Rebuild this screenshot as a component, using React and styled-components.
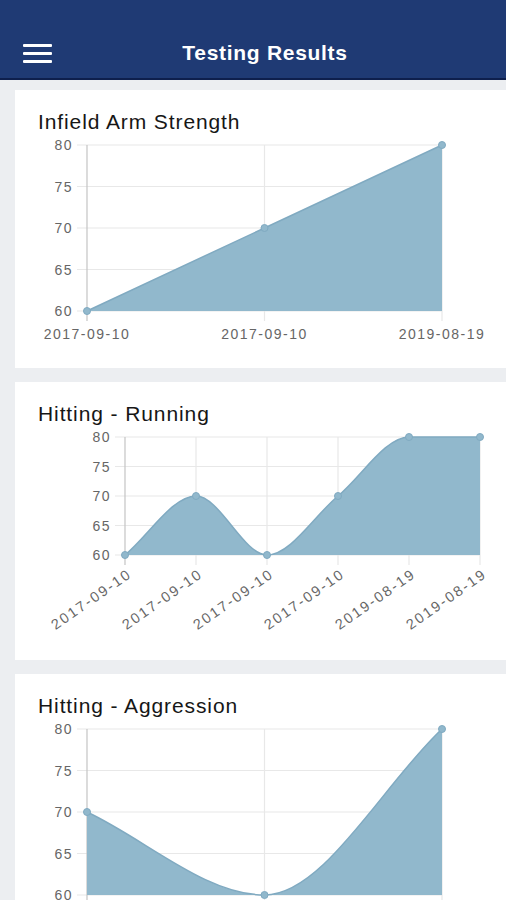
import React from 'react';
import styled, { createGlobalStyle } from 'styled-components';

const CHART_W = 491;
const CHART_H = 234;
const TOP = 11;
const MIN = 60;
const MAX = 80;
const STEPS = [80, 75, 70, 65, 60];

const charts = [
  {
    title: 'Infield Arm Strength',
    labels: ['2017-09-10', '2017-09-10', '2019-08-19'],
    values: [60, 70, 80],
    left: 72,
    right: 427,
    bottom: 177,
    curve: false,
  },
  {
    title: 'Hitting - Running',
    labels: ['2017-09-10', '2017-09-10', '2017-09-10', '2017-09-10', '2019-08-19', '2019-08-19'],
    values: [60, 70, 60, 70, 80, 80],
    left: 110,
    right: 465,
    bottom: 129,
    curve: true,
    rotate: true,
  },
  {
    title: 'Hitting - Aggression',
    labels: ['2017-09-10', '2017-09-10', '2019-08-19'],
    values: [70, 60, 80],
    left: 72,
    right: 427,
    bottom: 177,
    curve: true,
  },
];

// monotone cubic, same idea as chart.js cubicInterpolationMode: 'monotone'
function linePath(pts, curve) {
  if (!curve) return pts.map((p, i) => `${i ? 'L' : 'M'}${p.x},${p.y}`).join(' ');
  const n = pts.length;
  const d = [];
  for (let i = 0; i < n - 1; i++) d[i] = (pts[i + 1].y - pts[i].y) / (pts[i + 1].x - pts[i].x);
  const m = [];
  m[0] = d[0];
  m[n - 1] = d[n - 2];
  for (let i = 1; i < n - 1; i++) m[i] = d[i - 1] * d[i] <= 0 ? 0 : (d[i - 1] + d[i]) / 2;
  for (let i = 0; i < n - 1; i++) {
    if (d[i] === 0) {
      m[i] = 0;
      m[i + 1] = 0;
      continue;
    }
    const a = m[i] / d[i];
    const b = m[i + 1] / d[i];
    const s = a * a + b * b;
    if (s > 9) {
      const t = 3 / Math.sqrt(s);
      m[i] = t * a * d[i];
      m[i + 1] = t * b * d[i];
    }
  }
  let path = `M${pts[0].x},${pts[0].y}`;
  for (let i = 0; i < n - 1; i++) {
    const p0 = pts[i];
    const p1 = pts[i + 1];
    const dx = (p1.x - p0.x) / 3;
    path += ` C${p0.x + dx},${p0.y + m[i] * dx} ${p1.x - dx},${p1.y - m[i + 1] * dx} ${p1.x},${p1.y}`;
  }
  return path;
}

function Chart({ chart }) {
  const { labels, values, left, right, bottom, curve, rotate } = chart;
  const stepX = (right - left) / (values.length - 1);
  const yOf = (v) => bottom - ((v - MIN) / (MAX - MIN)) * (bottom - TOP);
  const pts = values.map((v, i) => ({ x: left + i * stepX, y: yOf(v) }));
  const line = linePath(pts, curve);
  const area = `${line} L${right},${bottom} L${left},${bottom} Z`;

  return (
    <Svg width={CHART_W} height={CHART_H}>
      {STEPS.map((s) => (
        <GridLine key={s} x1={left - 10} x2={right} y1={yOf(s)} y2={yOf(s)} />
      ))}
      {pts.map((p, i) => (
        <GridLine key={i} $axis={i === 0} x1={p.x} x2={p.x} y1={TOP} y2={bottom + 10} />
      ))}
      {STEPS.map((s) => (
        <AxisLabel key={s} x={left - 14} y={yOf(s) + 5} textAnchor="end">
          {s}
        </AxisLabel>
      ))}
      {pts.map((p, i) =>
        rotate ? (
          <AxisLabel
            key={i}
            $wide
            transform={`translate(${p.x + 2},${bottom + 13}) rotate(-35)`}
            y={10}
            textAnchor="end"
          >
            {labels[i]}
          </AxisLabel>
        ) : (
          <AxisLabel key={i} x={p.x} y={bottom + 28} textAnchor="middle">
            {labels[i]}
          </AxisLabel>
        )
      )}
      <Area d={area} />
      <Line d={line} />
      {pts.map((p, i) => (
        <Dot key={i} cx={p.x} cy={p.y} r={3.5} />
      ))}
    </Svg>
  );
}

export default function App() {
  return (
    <Page>
      <GlobalStyle />
      <Header>
        <NavBar>
          <Burger>
            <span />
            <span />
            <span />
          </Burger>
          <Title>Testing Results</Title>
        </NavBar>
      </Header>
      <List>
        {charts.map((c) => (
          <Card key={c.title}>
            <CardTitle>{c.title}</CardTitle>
            <Chart chart={c} />
          </Card>
        ))}
      </List>
    </Page>
  );
}

const GlobalStyle = createGlobalStyle`
  html, body {
    margin: 0;
    padding: 0;
    background: #eceef1;
    font-family: "Liberation Sans", Arial, sans-serif;
  }
`;

const Page = styled.div`
  width: 506px;
  height: 900px;
  overflow: hidden;
  background: #eceef1;
`;

const Header = styled.header`
  height: 54px;
  padding-top: 24px;
  background: #1f3a74;
  border-bottom: 2px solid #0e1f4d;
`;

const NavBar = styled.div`
  display: flex;
  align-items: center;
  height: 54px;
  padding: 0 28px 0 23px;
`;

const Burger = styled.div`
  display: flex;
  flex-direction: column;
  gap: 5px;
  width: 29px;
  margin-top: 4px;
  span {
    display: block;
    height: 3px;
    background: #fff;
    border-radius: 1px;
  }
`;

const Title = styled.h1`
  flex: 1;
  margin: 3px 0 0;
  text-align: center;
  color: #fff;
  font-size: 21px;
  font-weight: 700;
  letter-spacing: 0.7px;
`;

const List = styled.main`
  display: flex;
  flex-direction: column;
  gap: 14px;
  padding: 10px 0 0 15px;
`;

const Card = styled.section`
  background: #fff;
  padding-top: 20px;
  height: 278px;
  box-sizing: border-box;
  display: flex;
  flex-direction: column;
`;

const CardTitle = styled.h2`
  margin: 0 0 0 23px;
  font-size: 21px;
  line-height: 24px;
  font-weight: 400;
  color: #161616;
  letter-spacing: 0.9px;
`;

const Svg = styled.svg`
  display: block;
  flex-shrink: 0;
`;

const GridLine = styled.line`
  stroke: ${(p) => (p.$axis ? '#c4c4c4' : '#e8e8e8')};
  stroke-width: 1.2;
`;

const AxisLabel = styled.text`
  font-family: "Liberation Sans", Arial, sans-serif;
  font-size: ${(p) => (p.$wide ? '14.5px' : '14px')};
  letter-spacing: ${(p) => (p.$wide ? '2px' : '1.5px')};
  fill: #666;
`;

const Area = styled.path`
  fill: #91b8cc;
`;

const Line = styled.path`
  fill: none;
  stroke: #80aac1;
  stroke-width: 1.5;
`;

const Dot = styled.circle`
  fill: #91b8cc;
  stroke: #80aac1;
  stroke-width: 1;
`;
